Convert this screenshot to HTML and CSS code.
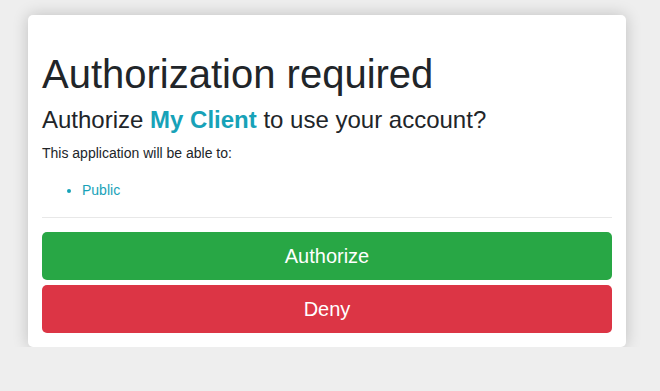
FILE: index.html
```html
<!DOCTYPE html>
<html>
<head>
    <title>Authorization required</title>
    <link rel="stylesheet" href="styles.css">
</head>
<body>
    <div class="card">
        <h1>Authorization required</h1>
        <h4>Authorize <strong class="client">My Client</strong> to use your account?</h4>
        <p>This application will be able to:</p>
        <ul class="scopes">
            <li>Public</li>
        </ul>
        <hr>
        <form class="actions" onsubmit="return false;">
            <button type="submit" class="btn btn-success">Authorize</button>
            <button type="submit" class="btn btn-danger">Deny</button>
        </form>
    </div>
</body>
</html>
```
FILE: styles.css
```css
body {
    background-color: #eeeeee;
    color: #212529;
    font-family: "Liberation Sans", Arial, sans-serif;
    font-size: 14px;
    line-height: 1.5;
    margin: 0;
    padding: 15px 34px 0 28px;
}

.card {
    background-color: #fff;
    border-radius: 5px;
    box-shadow: 0 0 16px rgba(0,0,0,0.2);
    padding: 35px 14px 14px;
}

h1 {
    font-size: 40px;
    font-weight: 400;
    line-height: 1.2;
    margin: 0 0 8px;
}

h4 {
    font-size: 24px;
    font-weight: 400;
    line-height: 1.2;
    margin: 0 0 8px;
}

.client {
    color: #17a2b8;
    font-weight: 700;
}

p {
    margin: 0 0 16px;
}

.scopes {
    color: #17a2b8;
    margin: 0 0 16px;
    padding-left: 40px;
}

hr {
    border: 0;
    border-top: 1px solid #e8e8e8;
    margin: 0 0 14px;
}

.actions {
    display: flex;
    flex-direction: column;
    gap: 5px;
}

.btn {
    border: 1px solid transparent;
    border-radius: 5px;
    color: #fff;
    cursor: pointer;
    font-family: inherit;
    font-size: 20px;
    line-height: 1.5;
    padding: 8px 16px;
    width: 100%;
}

.btn-success {
    background-color: #28a745;
}

.btn-danger {
    background-color: #dc3545;
}
```
